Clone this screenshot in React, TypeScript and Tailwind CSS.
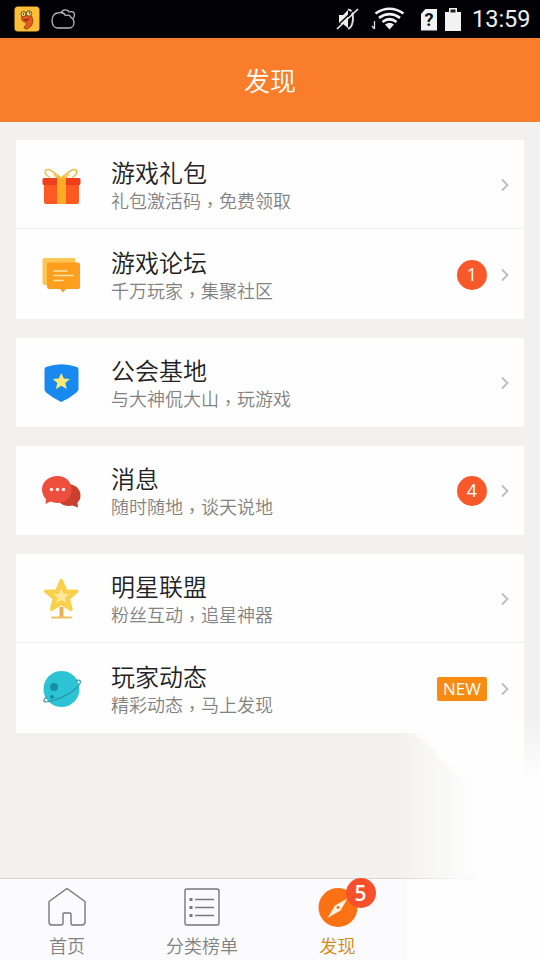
import type { ReactNode } from "react";

type Item = {
  title: string;
  desc: [string, string];
  icon: ReactNode;
  badge?: string;
  isNew?: boolean;
};

const STAR = "M0 -10 L2.9 -3.4 L10 -3 L4.6 1.7 L6.3 8.6 L0 4.9 L-6.3 8.6 L-4.6 1.7 L-10 -3 L-2.9 -3.4 Z";

function GiftIcon() {
  return (
    <svg className="block size-10" viewBox="0 0 40 40" fill="none">
      <path d="M19 12C15 10 11 4.500 7 4.500c-3 0-4 3-1 6l3 2M21 12c4-2 8-7.500 12-7.500 3 0 4 3 1 6l-3 2" stroke="#f3bb43" strokeWidth="1.500" />
      <path d="M3 19h35v18a2 2 0 0 1-2 2H5a2 2 0 0 1-2-2z" fill="#fd5a22" />
      <rect x="1.500" y="13" width="38" height="7" rx="1.500" fill="#ef3d1d" />
      <path d="M16 13h9v26h-9z" fill="#fdac25" />
      <path d="M12 8c2 1 4 4 8.500 4S27 9 29 8c-2 4-4 6-8.500 6S14 12 12 8z" fill="#fbb735" />
    </svg>
  );
}

function ForumIcon() {
  return (
    <svg className="block size-10" viewBox="0 0 40 40" fill="none">
      <rect x="1.500" y="3" width="33" height="27" rx="2" fill="#ffc654" />
      <path d="M8 7.500h29a2 2 0 0 1 2 2V32a2 2 0 0 1-2 2H25l-3 3.500-3-3.500H8a2 2 0 0 1-2-2V9.500a2 2 0 0 1 2-2z" fill="#fd9f1c" />
      <path d="M13 16h13M13 20.500h19M13 25.500h9" stroke="#ffe3a6" strokeWidth="1.400" strokeLinecap="round" />
    </svg>
  );
}

function GuildIcon() {
  return (
    <svg className="block size-10" viewBox="0 0 40 40">
      <path d="M5 4Q20.500 -1.500 36 4Q37.500 4.500 37.500 6.500V27L35.500 29.500Q29 35 20.300 39Q12 35 5 29.500L3.500 27V6.500Q3.500 4.500 5 4Z" fill="#1889ee" />
      <path d={STAR} transform="translate(20.300 18.500) scale(.86)" fill="#fbea75" />
    </svg>
  );
}

function MessageIcon() {
  return (
    <svg className="block size-10" viewBox="0 0 40 40">
      <path d="M27 13c7 0 12.500 5 12.500 11.500 0 3-1 5-3 7l.5 5-5.500-2c-8 2-16-3-16-10S20 13 27 13z" fill="#c9402f" />
      <path d="M16.500 5C25 5 30.500 10.500 30.500 18.500S25 32 16.500 32c-3 0-5-.6-7-1.400L4.500 33 5 28C2.500 26 1 22 1 18.500 1 10.500 8 5 16.500 5z" fill="#ee4e3e" />
      <g fill="#ffe8df">
        <circle cx="10.500" cy="18.500" r="1.800" />
        <circle cx="16.500" cy="18.500" r="1.800" />
        <circle cx="22.500" cy="18.500" r="1.800" />
      </g>
    </svg>
  );
}

function StarIcon() {
  return (
    <svg className="block size-10" viewBox="0 0 40 40" fill="none">
      <path d="M18.500 28h4v10h-4z" fill="#ecae55" />
      <path d="M11 38.500h19" stroke="#f3bd62" strokeWidth="2" strokeLinecap="round" />
      <path d={STAR} transform="translate(20.300 17) scale(1.580)" fill="#f9d04d" stroke="#f9d04d" strokeWidth="1.900" strokeLinejoin="round" />
      <path d={STAR} transform="translate(20.300 17.300) scale(.78)" fill="#ffe79b" />
    </svg>
  );
}

function PlanetIcon() {
  return (
    <svg className="block size-10" viewBox="0 0 40 40" fill="none">
      <circle cx="20.500" cy="20" r="18" fill="#2cc4d5" />
      <circle cx="13" cy="18" r="4" fill="#168ea3" />
      <circle cx="11" cy="28" r="2" fill="#168ea3" />
      <path d="M35 11.500c4-1.500 5 .5 4 3-4 7-16 14-27 17-7 2-10 2-9-.5.500-1.500 1.500-2.500 3-3" stroke="#2f8e9d" strokeWidth="1.100" />
    </svg>
  );
}

const groups: Item[][] = [
  [
    { title: "游戏礼包", desc: ["礼包激活码", "免费领取"], icon: <GiftIcon /> },
    { title: "游戏论坛", desc: ["千万玩家", "集聚社区"], icon: <ForumIcon />, badge: "1" },
  ],
  [{ title: "公会基地", desc: ["与大神侃大山", "玩游戏"], icon: <GuildIcon /> }],
  [{ title: "消息", desc: ["随时随地", "谈天说地"], icon: <MessageIcon />, badge: "4" }],
  [
    { title: "明星联盟", desc: ["粉丝互动", "追星神器"], icon: <StarIcon /> },
    { title: "玩家动态", desc: ["精彩动态", "马上发现"], icon: <PlanetIcon />, isNew: true },
  ],
];

function StatusBar() {
  return (
    <div className="flex h-[38px] items-center bg-[#020105] pl-[14px] pr-[9px]">
      <svg className="size-[26px]" viewBox="0 0 26 26" fill="none">
        <rect x=".5" y=".5" width="25" height="25" rx="3.500" fill="#fdbd36" />
        <path d="M8 9c3-2 8-2 10 2 2 5 0 10-5 12-3 0-4-2-1-4 1-1 0-2-1-3-3 0-4-3-3-7z" fill="#e9591e" stroke="#70420f" strokeWidth=".8" />
        <circle cx="9.500" cy="8" r="2.500" fill="#f5dc87" stroke="#634b15" />
        <circle cx="15" cy="7.500" r="2.700" fill="#f5dc87" stroke="#634b15" />
        <path d="M9 8h1M15 7h1" stroke="#261a08" strokeWidth="1.500" />
        <path d="M9 12.500c2 1 5 1 7-1-1 4-5 5-7 1z" fill="#912817" />
      </svg>
      <svg className="ml-[11px] h-[20px] w-[25px]" viewBox="0 0 25 20" fill="none" stroke="#b9b9bb" strokeWidth="1.300">
        <path d="M7 19C3 19 1 16 1 11.500 1 7 3.500 4 7 4c3-1 6 0 7.500 2.500 3-1 5 0 5.500 2 2 1 3 2.500 3 5 0 3-2 5.500-5 5.500z" />
        <path d="M10.500 3.500c1-3.500 6.500-3.500 7.500-.5 3-1 5.500 0 5.500 2.500 0 1.500-.5 3-1.500 4" />
      </svg>
      <svg className="ml-auto h-[24px] w-[24px]" viewBox="0 0 24 24" fill="none">
        <path d="M3 8h4l5-5v18l-5-4H3z" fill="#eee" />
        <path d="M12 2.500c4 0 5 4 5 9s-2 10-5 10" stroke="#ddd" strokeWidth="2" />
        <path d="M0 20 20 1" stroke="#020105" strokeWidth="1.500" />
        <path d="M1 22 22 2" stroke="#eee" strokeWidth="1.600" />
      </svg>
      <svg className="ml-[11px] h-[24px] w-[34px]" viewBox="0 0 34 24" fill="none">
        <g stroke="#f2f2f2" strokeWidth="2.700">
          <path d="M4.500 6.500Q18.500 -3 32.500 6.500" />
          <path d="M8 10.800Q18.500 3.500 29 10.800" />
          <path d="M11.500 15Q18.500 9.500 25.500 15" />
        </g>
        <path d="M14 17.500Q18.500 14 23 17.500L18.500 22.500Z" fill="#f2f2f2" />
        <path d="M3.500 14v8M1 19l2.500 3" stroke="#ddd" strokeWidth="1.300" />
      </svg>
      <div className="ml-[16px] mt-[1px] flex h-[22px] w-[16px] items-center justify-center bg-[#f2f2f2] font-['Roboto'] text-[18px] font-bold text-[#111] [clip-path:polygon(30%_0,100%_0,100%_100%,0_100%,0_25%)]">
        ?
      </div>
      <svg className="ml-[8px] h-[24px] w-[16px]" viewBox="0 0 16 24" fill="#f2f2f2">
        <path d="M0 5h4V1h8v4h4v19H0z" />
        <path d="M5.500 2.500h5v3h-5z" fill="#222" />
      </svg>
      <span className="ml-[11px] w-[59px] whitespace-nowrap pt-[2px] font-['Roboto'] text-[23.5px] leading-none text-[#eee]">13:59</span>
    </div>
  );
}

function Row({ item, divided }: { item: Item; divided: boolean }) {
  return (
    <div className={`flex items-center pl-[25px] pr-[13px] ${divided ? "-mt-px h-[91px] border-t border-[#f0efed] pt-px" : "h-[89px]"}`}>
      {item.icon}
      <div className="ml-[30px] flex-1 pt-px">
        <h2 className="text-[24px] font-[350] leading-[30px] text-[#222]">{item.title}</h2>
        <p className="text-[18px] font-[350] leading-[27px] text-[#828282]">
          {item.desc[0]}
          <span className="relative top-[4px] font-['Noto_Sans_CJK_TC',sans-serif]">，</span>
          {item.desc[1]}
        </p>
      </div>
      {item.badge && (
        <span className="mr-[12px] flex size-[30px] items-center justify-center rounded-full bg-[#f8592b] font-['Open_Sans'] text-[18px] text-white">
          {item.badge}
        </span>
      )}
      {item.isNew && (
        <span className="mr-[12px] flex h-[24px] w-[50px] items-center justify-center rounded-[2px] bg-[#f88b12] font-['Open_Sans'] text-[17px] text-white">
          NEW
        </span>
      )}
      <svg className="h-[14px] w-[12px]" viewBox="0 0 12 14" fill="none">
        <path d="M3 1.500 8.500 7 3 12.500" stroke="#bdbdbd" strokeWidth="1.800" />
      </svg>
    </div>
  );
}

// soft white patch over the bottom right corner
function CornerFade() {
  return (
    <svg className="pointer-events-none absolute left-[400px] top-[720px] h-[240px] w-[140px]" viewBox="0 0 140 240">
      <defs>
        <linearGradient id="fade-x" x1="0" x2="1" y1="0" y2="0">
          <stop offset="0" stopColor="#fefefe" stopOpacity="0" />
          <stop offset=".3" stopColor="#fefefe" stopOpacity=".35" />
          <stop offset="1" stopColor="#fefefe" />
        </linearGradient>
        <linearGradient id="fade-y" x1="0" x2="0" y1="0" y2="1">
          <stop offset="0" stopColor="#fefefe" stopOpacity="0" />
          <stop offset="1" stopColor="#fefefe" />
        </linearGradient>
        <filter id="soft">
          <feGaussianBlur stdDeviation="1.500" />
        </filter>
      </defs>
      <rect x="0" y="13" width="80" height="147" fill="url(#fade-x)" />
      <path d="M78 13H124V240H7V160H78Z" fill="#fefefe" />
      <path d="M124 59h16v181h-16z" fill="#fefefe" />
      <path d="M124 0h16v60h-16z" fill="url(#fade-y)" />
      <path d="M10 13Q20 15 31 28L52 50Q65 62 80 67V13Z" fill="#fefefe" filter="url(#soft)" />
    </svg>
  );
}

function TabBar() {
  return (
    <nav className="flex h-[82px] border-t border-[#d8d7d5] bg-[#fbfafc] text-[18px] leading-[26px] text-[#828282]">
      <div className="flex w-[134px] flex-col items-center pt-[8px]">
        <svg className="size-10" viewBox="0 0 40 40" fill="none" stroke="#777" strokeWidth="1.400" strokeLinejoin="round">
          <path d="M2 14.500 20 1.500l18 13V35a3 3 0 0 1-3 3H26a2 2 0 0 1-2-2V27a1 1 0 0 0-1-1H17a1 1 0 0 0-1 1v9a2 2 0 0 1-2 2H5a3 3 0 0 1-3-3z" />
        </svg>
        <span className="mt-[5px] font-[350]">首页</span>
      </div>
      <div className="flex w-[136px] flex-col items-center pt-[8px]">
        <svg className="size-10" viewBox="0 0 40 40" fill="none" stroke="#777" strokeWidth="1.400">
          <rect x="3" y="2" width="34" height="36" rx="2" />
          <path d="M13 12.500h19M13 20.500h19M13 28.500h19" />
          <path d="M7.500 12.500h3M7.500 20.500h3M7.500 28.500h3" strokeWidth="3" />
        </svg>
        <span className="mt-[5px] font-[350]">分类榜单</span>
      </div>
      <div className="flex w-[135px] flex-col items-center pt-[8px] text-[#d38913]">
        <div className="relative">
          <svg className="block size-10" viewBox="0 0 40 40">
            <circle cx="20" cy="20.500" r="19.500" fill="#fd7115" />
            <path d="M29.500 11.500 22.500 23.500 9.500 31 17 18.500Z" fill="#fff2dd" />
            <circle cx="20" cy="20.500" r="1.500" fill="#fd7115" />
          </svg>
          <span className="absolute -top-[9px] left-[28px] z-10 flex size-[30px] items-center justify-center rounded-full bg-[#f8502b] font-['Open_Sans'] text-[21px] font-semibold text-white">
            5
          </span>
        </div>
        <span className="mt-[5px] font-[350]">发现</span>
      </div>
    </nav>
  );
}

export default function App() {
  return (
    <div className="relative flex h-[960px] w-[540px] flex-col overflow-hidden bg-[#f2f1ef] font-['Noto_Sans_CJK_SC',sans-serif]">
      <StatusBar />
      <header className="flex h-[84px] items-center justify-center bg-[#f97d2a] pb-[2px] text-[26px] font-[350] text-white">发现</header>
      <main className="flex flex-1 flex-col gap-[19px] px-[16px] pt-[18px]">
        {groups.map((items) => (
          <section key={items[0].title} className="bg-[#fefefe]">
            {items.map((item, i) => (
              <Row key={item.title} item={item} divided={i > 0} />
            ))}
          </section>
        ))}
      </main>
      <TabBar />
      <CornerFade />
    </div>
  );
}
